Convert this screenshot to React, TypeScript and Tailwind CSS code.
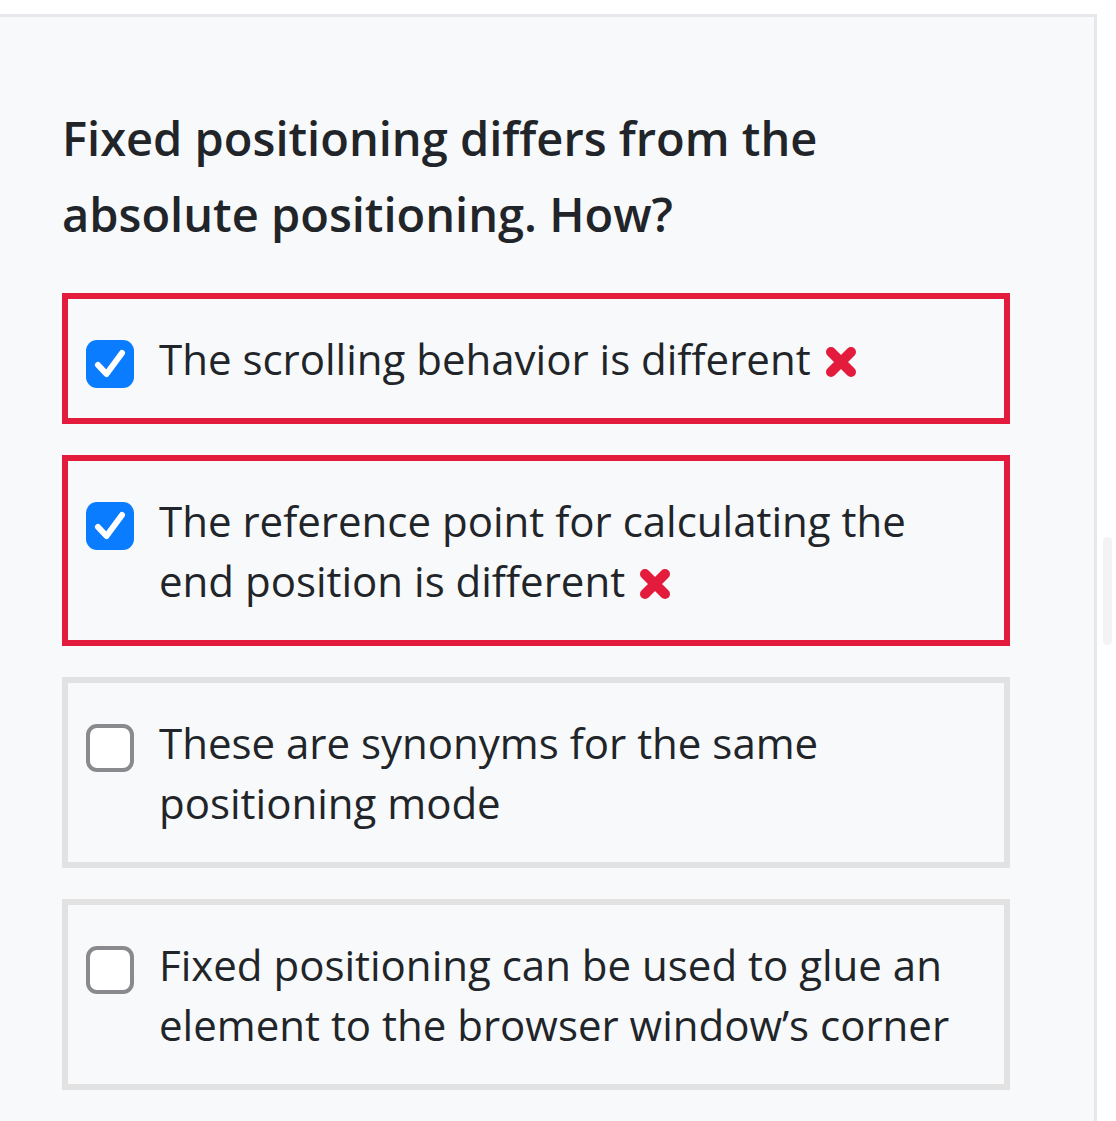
import React from 'react';

type Option = {
  text: string;
  checked: boolean;
  wrong: boolean;
};

const options: Option[] = [
  { text: 'The scrolling behavior is different', checked: true, wrong: true },
  { text: 'The reference point for calculating the end position is different', checked: true, wrong: true },
  { text: 'These are synonyms for the same positioning mode', checked: false, wrong: false },
  { text: 'Fixed positioning can be used to glue an element to the browser window’s corner', checked: false, wrong: false },
];

function CrossMark() {
  return (
    <svg viewBox="0 0 34 34" className="inline-block w-[34px] h-[34px] ml-[2px] align-[-4px]">
      <path d="M7 7 L27 27 M27 7 L7 27" stroke="#e31c3d" strokeWidth="10" strokeLinecap="round" />
    </svg>
  );
}

function Checkbox({ checked }: { checked: boolean }) {
  if (checked) {
    return (
      <div className="shrink-0 w-[48px] h-[48px] rounded-[11px] bg-[#0a7cff] flex items-center justify-center mt-[11px]">
        <svg viewBox="0 0 48 48" className="w-[48px] h-[48px]">
          <path d="M12 25 L20.5 34 L36 13" fill="none" stroke="#fff" strokeWidth="6" strokeLinecap="round" strokeLinejoin="round" />
        </svg>
      </div>
    );
  }
  return <div className="shrink-0 w-[48px] h-[48px] rounded-[11px] bg-white border-[4px] border-[#8a8a8e] mt-[11px]" />;
}

export default function App() {
  return (
    <div className="relative min-h-[1121px] bg-white pt-[14px] font-['Open_Sans',sans-serif] text-[#212529] overflow-hidden">
      <div className="w-[1097px] min-h-[1110px] bg-[#f8f9fa] border-t-[3px] border-r-[3px] border-[#e6e8eb] pt-[83px] pl-[62px] pb-[40px]">
        <h2 className="text-[47px] leading-[76px] font-semibold w-[900px]">
          Fixed positioning differs from the absolute positioning. How?
        </h2>

        <div className="mt-[41px] flex flex-col gap-[31px] w-[948px]">
          {options.map((o) => (
            <div
              key={o.text}
              className={
                o.wrong
                  ? 'border-[6px] border-[#e31c3d] pt-[30px] pb-[29px] pl-[18px] pr-[40px] flex gap-[25px]'
                  : 'border-[6px] border-[#e2e2e2] pt-[30px] pb-[29px] pl-[18px] pr-[40px] flex gap-[25px]'
              }
            >
              <Checkbox checked={o.checked} />
              <p className="text-[42px] leading-[60px]">
                {o.text}
                {o.wrong && (
                  <>
                    {' '}
                    <CrossMark />
                  </>
                )}
              </p>
            </div>
          ))}
        </div>
      </div>

      {/* faint scrollbar thumb */}
      <div className="absolute left-[1103px] top-[537px] w-[9px] h-[108px] rounded-full bg-[#f3f3f4]" />
    </div>
  );
}
